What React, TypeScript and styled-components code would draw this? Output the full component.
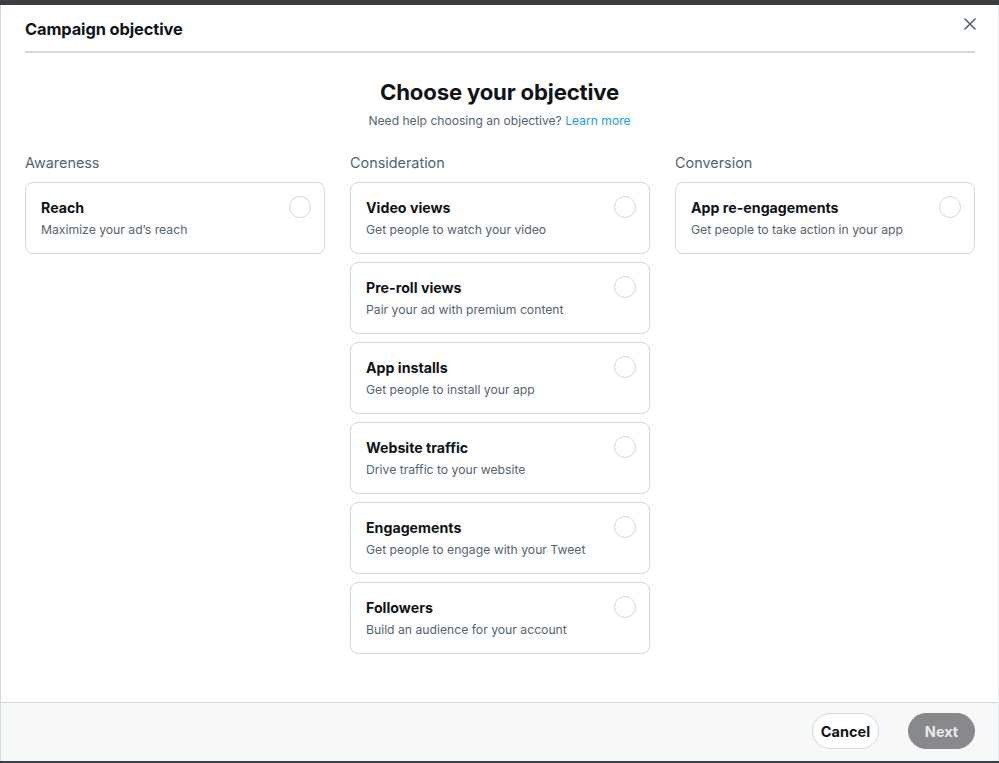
import React from "react"
import styled, { createGlobalStyle } from "styled-components"

const Global = createGlobalStyle`
	html, body {
		margin: 0;
		padding: 0;
		background: #3b3e43;
	}
	* {
		box-sizing: border-box;
	}
`

const Screen = styled.div`
	height: 763px;
	padding: 5px 0 2px;
	background: #3b3e43;
	font-family: Inter, "Noto Sans", sans-serif;
	color: #0f1419;
`

const Modal = styled.div`
	height: 100%;
	display: flex;
	flex-direction: column;
	background: #fff;
	border-left: 1px solid #cfd9de;
	border-right: 1px solid #e7ecee;
`

const Header = styled.header`
	margin: 0 23px 0 24px;
	height: 48px;
	padding-top: 2px;
	display: flex;
	align-items: center;
	justify-content: space-between;
	border-bottom: 2px solid #cfd9de;
`

const HeaderTitle = styled.h1`
	margin: 0;
	font-size: 16.4px;
	font-weight: 700;
	letter-spacing: -0.1px;
`

const CloseButton = styled.button`
	border: 0;
	background: none;
	padding: 0;
	margin-right: -5px;
	margin-top: -10px;
	width: 20px;
	height: 20px;
	display: flex;
	align-items: center;
	justify-content: center;
	color: #536471;
	cursor: pointer;
`

const Body = styled.main`
	flex: 1;
	padding: 0 24px;
`

const Intro = styled.div`
	text-align: center;
	padding-top: 25px;
`

const Title = styled.h2`
	margin: 0;
	font-size: 22.2px;
	line-height: 28px;
	font-weight: 700;
	letter-spacing: -0.2px;
`

const Help = styled.p`
	margin: 7px 0 0;
	font-size: 12.1px;
	line-height: 16px;
	color: #536471;
`

const Link = styled.a`
	color: #1d9bf0;
	text-decoration: none;
`

const Columns = styled.div`
	margin-top: 24px;
	display: grid;
	grid-template-columns: repeat(3, 300px);
	column-gap: 25px;
`

const Column = styled.section`
	display: flex;
	flex-direction: column;
	gap: 8px;
`

const ColumnLabel = styled.h3`
	margin: 0 0 1px;
	font-size: 14.4px;
	line-height: 20px;
	font-weight: 400;
	color: #536471;
`

const Card = styled.label`
	position: relative;
	height: 72px;
	border: 1px solid #cfd9de;
	border-radius: 8px;
	padding: 15px 15px 0;
	cursor: pointer;
`

const CardTitle = styled.div`
	font-size: 14.2px;
	line-height: 20px;
	font-weight: 700;
`

const CardText = styled.div`
	margin-top: 4px;
	font-size: 12.2px;
	line-height: 16px;
	color: #536471;
`

const Radio = styled.span`
	position: absolute;
	top: 13px;
	right: 13px;
	width: 22px;
	height: 22px;
	border-radius: 50%;
	border: 1px solid #cfd9de;
`

const Footer = styled.footer`
	height: 59px;
	border-top: 1px solid #cfd9de;
	background: #f7f9f9;
	display: flex;
	align-items: center;
	justify-content: flex-end;
	gap: 29px;
	padding: 0 23px 2px 0;
`

const Pill = styled.button<{ $primary?: boolean }>`
	width: 67px;
	height: 36px;
	padding: 0;
	border-radius: 18px;
	font-family: inherit;
	font-size: 14.5px;
	font-weight: 700;
	border: 1px solid ${({ $primary }) => ($primary ? "#87898c" : "#cfd9de")};
	background: ${({ $primary }) => ($primary ? "#87898c" : "#fff")};
	color: ${({ $primary }) => ($primary ? "#e9eaea" : "#0f1419")};
	cursor: pointer;
`

type Objective = { title: string; text: string }

const groups: { label: string; items: Objective[] }[] = [
	{
		label: "Awareness",
		items: [{ title: "Reach", text: "Maximize your ad’s reach" }],
	},
	{
		label: "Consideration",
		items: [
			{ title: "Video views", text: "Get people to watch your video" },
			{ title: "Pre-roll views", text: "Pair your ad with premium content" },
			{ title: "App installs", text: "Get people to install your app" },
			{ title: "Website traffic", text: "Drive traffic to your website" },
			{ title: "Engagements", text: "Get people to engage with your Tweet" },
			{ title: "Followers", text: "Build an audience for your account" },
		],
	},
	{
		label: "Conversion",
		items: [{ title: "App re-engagements", text: "Get people to take action in your app" }],
	},
]

const App: React.FC = () => {
	return (
		<Screen>
			<Global />
			<Modal>
				<Header>
					<HeaderTitle>Campaign objective</HeaderTitle>
					<CloseButton aria-label="Close">
						<svg width="12" height="12" viewBox="0 0 12 12">
							<path d="M1 1L11 11M11 1L1 11" stroke="currentColor" strokeWidth="1.6" strokeLinecap="round" />
						</svg>
					</CloseButton>
				</Header>
				<Body>
					<Intro>
						<Title>Choose your objective</Title>
						<Help>
							Need help choosing an objective? <Link href="#">Learn more</Link>
						</Help>
					</Intro>
					<Columns>
						{groups.map((group) => (
							<Column key={group.label}>
								<ColumnLabel>{group.label}</ColumnLabel>
								{group.items.map((item) => (
									<Card key={item.title}>
										<CardTitle>{item.title}</CardTitle>
										<CardText>{item.text}</CardText>
										<Radio />
									</Card>
								))}
							</Column>
						))}
					</Columns>
				</Body>
				<Footer>
					<Pill>Cancel</Pill>
					<Pill $primary>Next</Pill>
				</Footer>
			</Modal>
		</Screen>
	)
}

export default App
